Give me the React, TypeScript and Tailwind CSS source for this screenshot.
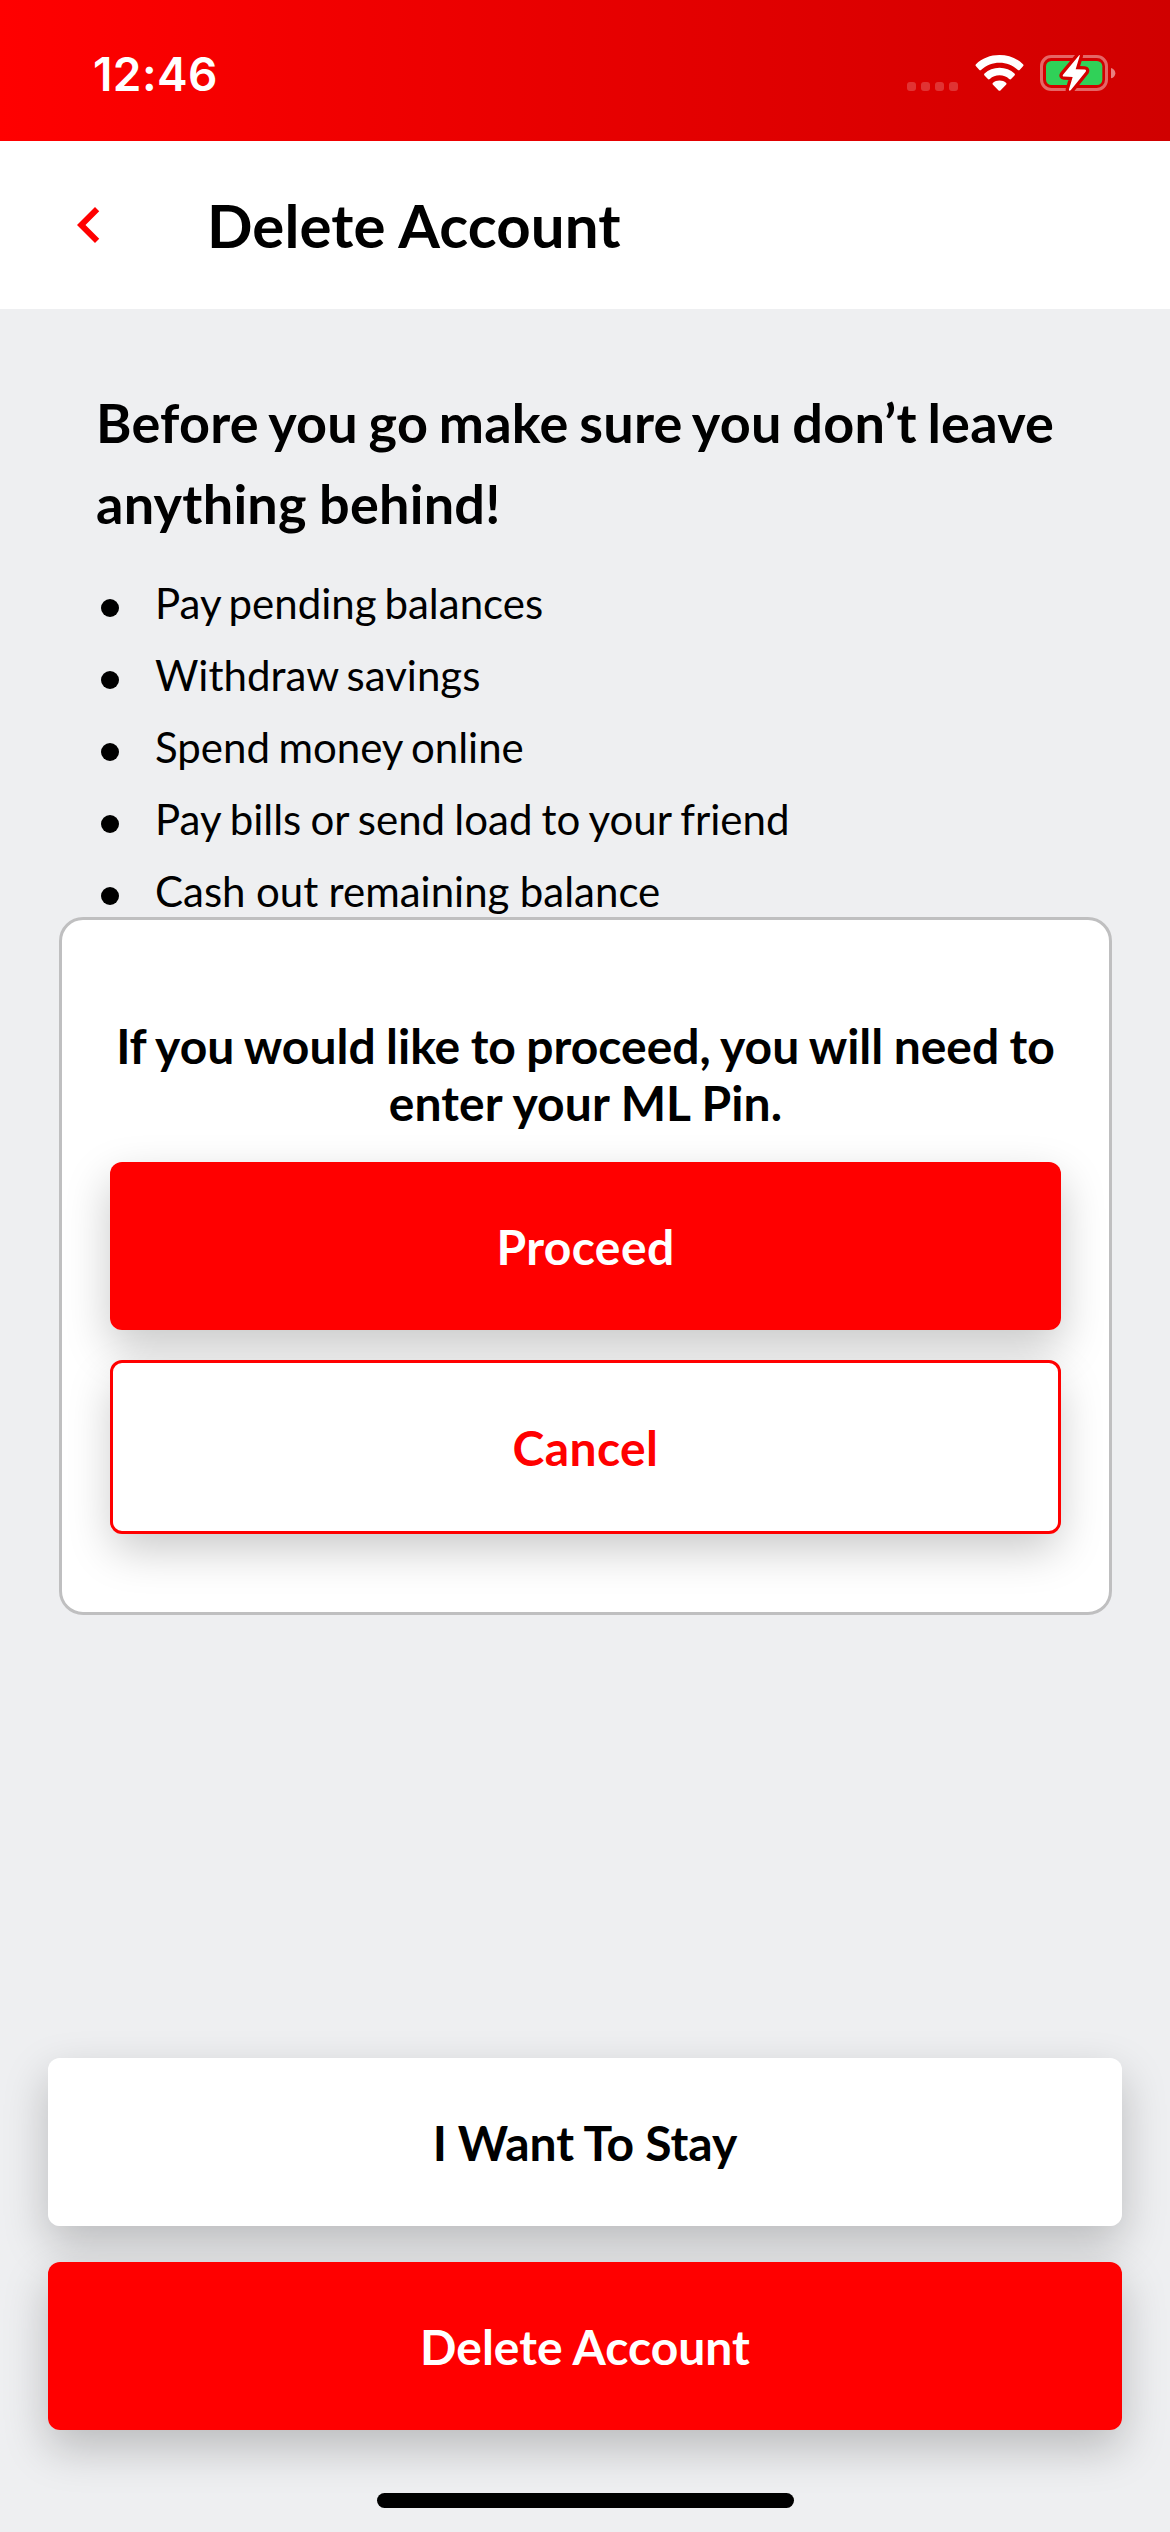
import type { ReactNode } from "react";

const checklist = [
  { text: "Pay pending balances", spacing: "[word-spacing:-2.8px]" },
  { text: "Withdraw savings", spacing: "[word-spacing:-2.5px]" },
  { text: "Spend money online", spacing: "[word-spacing:-2.3px]" },
  { text: "Pay bills or send load to your friend", spacing: "[word-spacing:-1.6px]" },
  { text: "Cash out remaining balance", spacing: "[word-spacing:-0.4px]" },
];

// The shadow sits on a layer behind every button of its stack, so that
// neighbouring buttons are never darkened by it.
function ActionButton({ className, children }: { className: string; children: ReactNode }) {
  return (
    <button
      className={`relative flex w-full items-center justify-center rounded-xl pt-0.5 text-[48px] leading-[58px] font-bold before:absolute before:inset-0 before:-z-10 before:rounded-xl before:shadow-[0_18px_45px_rgba(0,0,0,0.22)] ${className}`}
    >
      {children}
    </button>
  );
}

function WifiIcon() {
  return (
    <svg className="h-9 w-[49px]" viewBox="0 0 145 108" fill="#fff">
      <path d="M72.500 0C45 0 20 10 2 27.500Q-1 30.500 2 34L11.500 44.500Q14.500 47.500 18 44.500C33 31 52 23.500 72.500 23.500S112 31 127 44.500Q130.500 47.500 133.500 44.500L143 34Q146 30.500 143 27.500C125 10 100 0 72.500 0Z" />
      <path d="M72.500 38.500C54.500 38.500 39.500 45 27.500 55.500Q24.500 58.500 27.500 61.500L37 71.500Q40 74.500 43.500 72C51.500 65 61 61 72.500 61S93.500 65 101.500 72Q105 74.500 108 71.500L117.500 61.500Q120.500 58.500 117.500 55.500C105.500 45 90.500 38.500 72.500 38.500Z" />
      <path d="M72.500 76.500C65 76.500 58 79 53 83Q50 86 53 89L69 105.500Q72.500 109 76 105.500L92 89Q95 86 92 83C87 79 80 76.500 72.500 76.500Z" />
    </svg>
  );
}

function BatteryIcon() {
  const bolt =
    "M118 3 69 62Q66 67 72 67.500L98 69 87 106Q86 113 92 109L137 53Q140 47 134 46.500L107 45.500 119 6Q120 0 115 5Z";
  return (
    <svg className="h-[38px] w-[76px]" viewBox="0 0 228 114">
      <defs>
        <mask id="bolt-gap" maskUnits="userSpaceOnUse" x="0" y="0" width="228" height="114">
          <rect width="228" height="114" fill="#fff" />
          <path d={bolt} fill="#000" stroke="#000" strokeWidth="20" strokeLinejoin="round" />
        </mask>
      </defs>
      <g mask="url(#bolt-gap)">
        <rect x="4.500" y="7.500" width="195" height="99" rx="29" fill="none" stroke="#fff" strokeOpacity="0.4" strokeWidth="9" />
        <rect x="18" y="21" width="169" height="72" rx="16" fill="#30d158" />
      </g>
      <path d="M213 42C221 44 226 50 226 57.500S221 71 213 73Z" fill="#fff" fillOpacity="0.5" />
      <path d={bolt} fill="#fff" />
    </svg>
  );
}

function StatusBar() {
  return (
    <div className="flex h-[141px] items-start justify-between bg-linear-to-r from-[#ff0000] to-[#d00000] pt-[46px] pr-[54px] pl-[93px] text-white">
      <span className="font-[Inter,sans-serif] text-[46px] leading-[57px] font-semibold tracking-[0.4px]">12:46</span>
      <div className="flex items-center pt-2">
        <div className="mt-[26px] mr-[17px] flex gap-[5px]">
          {[0, 1, 2, 3].map((dot) => (
            <span key={dot} className="size-[9px] rounded-[3px] bg-white/20" />
          ))}
        </div>
        <div className="mr-4">
          <WifiIcon />
        </div>
        <BatteryIcon />
      </div>
    </div>
  );
}

export default function App() {
  return (
    <div className="relative flex h-[2532px] w-[1170px] flex-col overflow-hidden bg-[#eeeff1] font-[Lato,sans-serif] text-black">
      <StatusBar />
      <header className="flex h-[168px] items-center bg-white pl-[53px]">
        <svg className="size-[72px] fill-[#ff0000]" viewBox="0 0 24 24">
          <path d="M15.410 7.410 14 6l-6 6 6 6 1.410-1.410L10.830 12z" />
        </svg>
        <h1 className="ml-[82px] text-[60px] leading-[72px] font-bold tracking-[0.1px]">Delete Account</h1>
      </header>

      <main className="px-24 pt-[73px]">
        <h2 className="text-[54px] leading-[81px] font-bold tracking-[0.25px]">
          <span className="[word-spacing:-2.8px]">Before you go make sure you don’t leave</span>
          <br />
          <span className="[word-spacing:-1.2px]">anything behind!</span>
        </h2>
        <ul className="mt-[22px]">
          {checklist.map((item) => (
            <li key={item.text} className={`flex h-[72px] items-center text-[42px] leading-[72px] ${item.spacing}`}>
              <span className="mt-3 mr-9 ml-[5px] size-[18px] rounded-full bg-black" />
              <span className="mt-0.5">{item.text}</span>
            </li>
          ))}
        </ul>
      </main>

      <footer className="isolate mt-auto flex flex-col gap-9 px-12">
        <ActionButton className="h-[168px] bg-white [word-spacing:-0.7px]">I Want To Stay</ActionButton>
        <ActionButton className="h-[168px] bg-[#ff0000] text-white">Delete Account</ActionButton>
      </footer>
      <div className="mx-auto mt-[63px] mb-6 h-[15px] w-[417px] shrink-0 rounded-full bg-black" />

      <section className="absolute top-[917px] left-[59px] isolate flex h-[698px] w-[1053px] flex-col rounded-3xl border-3 border-[#bfbfc0] bg-white px-12 pt-[97px]">
        <p className="text-center text-[48px] leading-[57px] font-bold">
          <span className="[word-spacing:-1.25px]">If you would like to proceed, you will need to</span>
          <br />
          <span className="tracking-[0.1px]">enter your ML Pin.</span>
        </p>
        <div className="mt-[31px] flex flex-col gap-[30px] tracking-[0.4px]">
          <ActionButton className="h-[168px] bg-[#ff0000] text-white">Proceed</ActionButton>
          <ActionButton className="h-[174px] border-3 border-[#ff0000] bg-white text-[#ff0000]">Cancel</ActionButton>
        </div>
      </section>
    </div>
  );
}
